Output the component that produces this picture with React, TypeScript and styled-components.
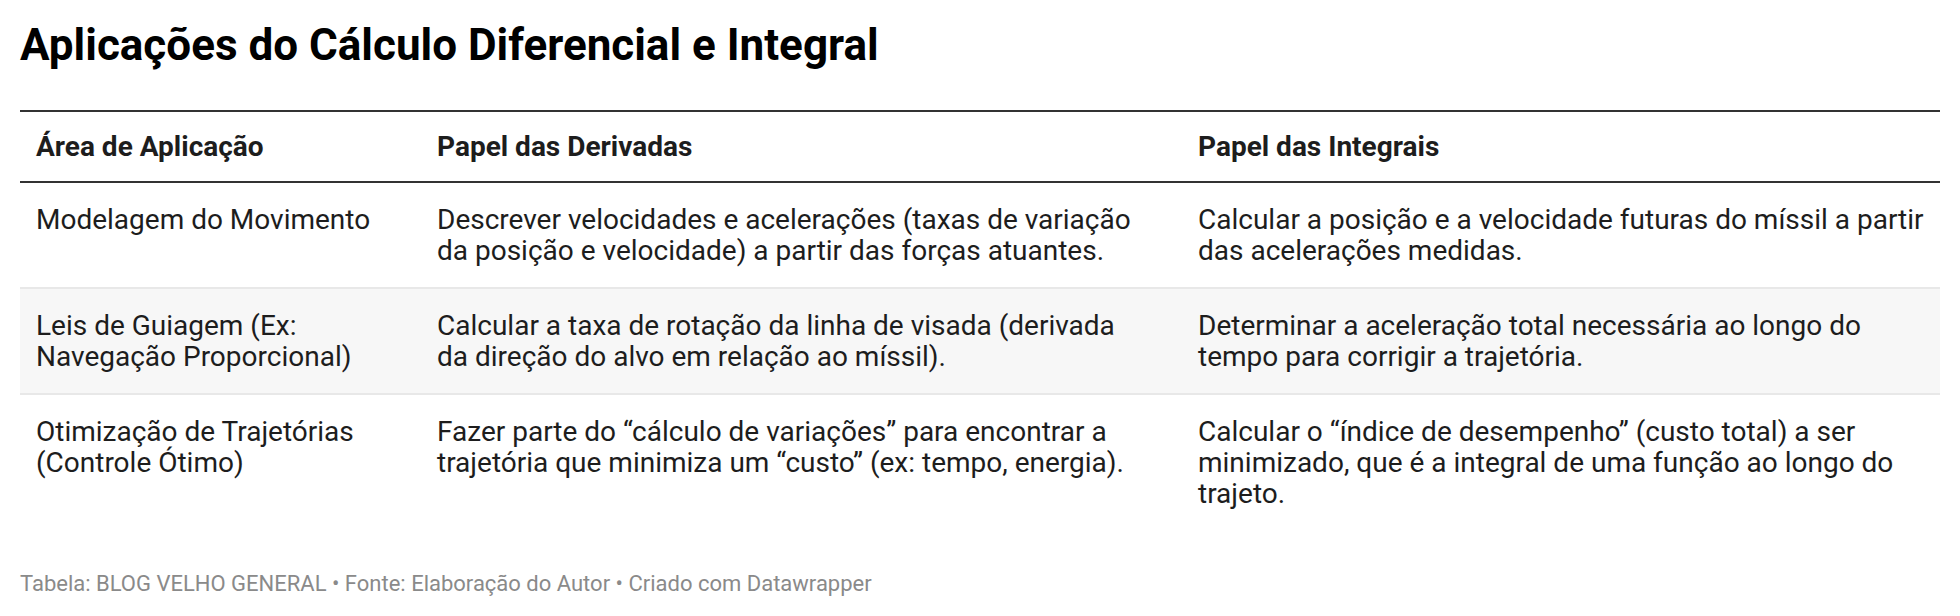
import styled, { createGlobalStyle } from 'styled-components';

interface RowData {
  area: string;
  derivadas: string;
  integrais: string;
}

const rows: RowData[] = [
  {
    area: 'Modelagem do Movimento',
    derivadas:
      'Descrever velocidades e acelerações (taxas de variação da posição e velocidade) a partir das forças atuantes.',
    integrais:
      'Calcular a posição e a velocidade futuras do míssil a partir das acelerações medidas.',
  },
  {
    area: 'Leis de Guiagem (Ex: Navegação Proporcional)',
    derivadas:
      'Calcular a taxa de rotação da linha de visada (derivada da direção do alvo em relação ao míssil).',
    integrais:
      'Determinar a aceleração total necessária ao longo do tempo para corrigir a trajetória.',
  },
  {
    area: 'Otimização de Trajetórias (Controle Ótimo)',
    derivadas:
      'Fazer parte do “cálculo de variações” para encontrar a trajetória que minimiza um “custo” (ex: tempo, energia).',
    integrais:
      'Calcular o “índice de desempenho” (custo total) a ser minimizado, que é a integral de uma função ao longo do trajeto.',
  },
];

const App = () => {
  return (
    <>
      <GlobalStyle />
      <Page>
        <Title>Aplicações do Cálculo Diferencial e Integral</Title>
        <Table>
          <HeaderRow>
            <HeaderCell>Área de Aplicação</HeaderCell>
            <HeaderCell>Papel das Derivadas</HeaderCell>
            <HeaderCell>Papel das Integrais</HeaderCell>
          </HeaderRow>
          {rows.map((row, index) => {
            return (
              <BodyRow key={index} striped={index % 2 === 1} last={index === rows.length - 1}>
                <Cell>{row.area}</Cell>
                <Cell>{row.derivadas}</Cell>
                <Cell>{row.integrais}</Cell>
              </BodyRow>
            );
          })}
        </Table>
        <Footer>
          Tabela: BLOG VELHO GENERAL • Fonte: Elaboração do Autor • Criado com Datawrapper
        </Footer>
      </Page>
    </>
  );
};

export default App;

const GlobalStyle = createGlobalStyle`
  body {
    margin: 0;
    background: #ffffff;
    font-family: Roboto, 'Liberation Sans', sans-serif;
    color: #1d1d1d;
  }
`;

const Page = styled.div`
  padding: 19px 20px 20px;
`;

const Title = styled.h1`
  margin: 0 0 38px;
  font-size: 44px;
  line-height: 53px;
  font-weight: 700;
  color: #000000;
`;

const Table = styled.div`
  display: flex;
  flex-direction: column;
  border-top: 2px solid #333333;
`;

const RowBase = styled.div`
  display: grid;
  grid-template-columns: 345px 705px 1fr;
  column-gap: 56px;
  padding-left: 16px;
  padding-right: 8px;
`;

const HeaderRow = styled(RowBase)`
  padding-top: 19px;
  padding-bottom: 19px;
  border-bottom: 2px solid #333333;
`;

const BodyRow = styled(RowBase)<{ striped: boolean; last: boolean }>`
  padding-top: 21px;
  padding-bottom: 21px;
  background-color: ${p => (p.striped ? '#f7f7f7' : 'transparent')};
  border-bottom: ${p => (p.last ? 'none' : '2px solid #e8e8e8')};
`;

const HeaderCell = styled.div`
  font-size: 28px;
  line-height: 31px;
  font-weight: 700;
  color: #1d1d1d;
`;

const Cell = styled.div`
  font-size: 28px;
  line-height: 31px;
  font-weight: 400;
  color: #1d1d1d;
`;

const Footer = styled.div`
  margin-top: 41px;
  font-size: 22px;
  line-height: 25px;
  color: #8a8a8a;
`;
